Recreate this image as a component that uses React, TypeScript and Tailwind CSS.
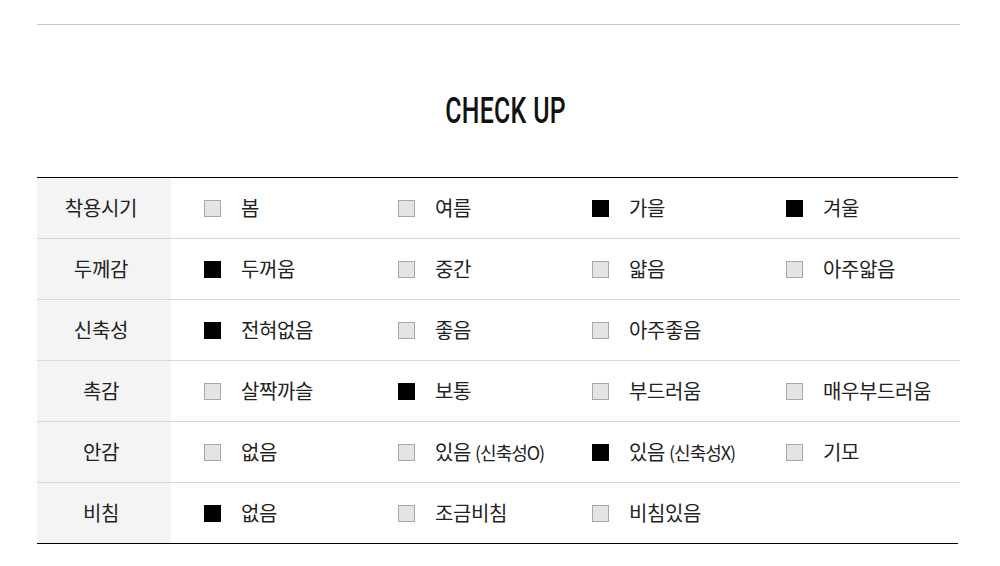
const rows: { label: string; items: { text: string; sub?: string; on?: boolean }[] }[] = [
  { label: "착용시기", items: [{ text: "봄" }, { text: "여름" }, { text: "가을", on: true }, { text: "겨울", on: true }] },
  { label: "두께감", items: [{ text: "두꺼움", on: true }, { text: "중간" }, { text: "얇음" }, { text: "아주얇음" }] },
  { label: "신축성", items: [{ text: "전혀없음", on: true }, { text: "좋음" }, { text: "아주좋음" }] },
  { label: "촉감", items: [{ text: "살짝까슬" }, { text: "보통", on: true }, { text: "부드러움" }, { text: "매우부드러움" }] },
  { label: "안감", items: [{ text: "없음" }, { text: "있음", sub: "(신축성O)" }, { text: "있음", sub: "(신축성X)", on: true }, { text: "기모" }] },
  { label: "비침", items: [{ text: "없음", on: true }, { text: "조금비침" }, { text: "비침있음" }] },
];

export default function App() {
  return (
    <div className="w-[1000px] h-[566px] bg-white text-[#222] font-['Noto_Sans_CJK_KR',sans-serif]">
      <div className="ml-[37px] w-[923px] pt-[24px]">
        <div className="border-t border-[#c8c8c8]" />

        {/* Title */}
        <div className="h-[152px] flex items-center justify-center pt-[20px] pl-[15px]">
          <h2 className="font-['Roboto',sans-serif] font-medium text-[36px] leading-none tracking-[0.5px] text-[#111] scale-x-[0.69]">
            CHECK UP
          </h2>
        </div>

        {/* Table */}
        <div className="w-[921px] border-t border-black">
          {rows.map((row, i) => (
            <div
              key={row.label}
              className={
                i === rows.length - 1
                  ? "flex h-[61px] border-b border-black"
                  : "flex h-[61px] w-[923px] border-b border-[#d8d8d8]"
              }
            >
              <div className="w-[134px] shrink-0 bg-[#f4f4f4] flex items-center justify-center pr-[6px] text-[20px] tracking-[-0.3px]">
                {row.label}
              </div>
              <div className="flex-1 grid grid-cols-[194px_194px_194px_194px] pl-[33px] items-center">
                {row.items.map((item, j) => (
                  <div key={j} className="flex items-center">
                    <span
                      className={
                        item.on
                          ? "w-[17px] h-[17px] bg-black border border-black"
                          : "w-[17px] h-[17px] bg-[#e4e4e4] border border-[#a8a8a8]"
                      }
                    />
                    <span className="ml-[20px] text-[20px] leading-none tracking-[-0.4px]">
                      {item.text}
                      {item.sub && (
                        <span className="ml-[4px] text-[18px] tracking-[-1px]">{item.sub}</span>
                      )}
                    </span>
                  </div>
                ))}
              </div>
            </div>
          ))}
        </div>
      </div>
    </div>
  );
}
